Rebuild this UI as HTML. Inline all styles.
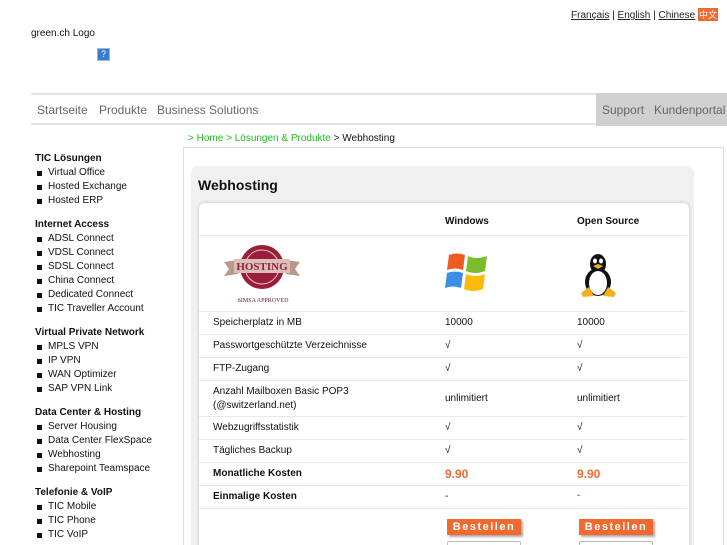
<!DOCTYPE html>
<html style="height:545px;overflow:hidden"><head><meta charset="utf-8"><style>
*{margin:0;padding:0;box-sizing:border-box}
body{width:727px;height:545px;overflow:hidden;background:#fff;font-family:"Liberation Sans",Arial,sans-serif;font-size:10px;color:#111;position:relative}
.a{position:absolute;white-space:nowrap}
.lang{top:8px;right:9px;font-size:10px}
.lang a{color:#222;text-decoration:underline}
.nav{left:31px;top:93px;width:696px;height:32px;border-top:2px solid #e2e2e2;border-bottom:2px solid #e2e2e2}
.nav span{position:absolute;top:8px;font-size:12px;color:#666}
.gray{position:absolute;left:565px;top:-2px;width:131px;height:33px;background:#d0d0d0}
.side{position:absolute;left:0;top:2px;width:180px;height:545px}
.side .h{font-weight:bold;left:35px}
.side .i{left:48px}
.side .b{left:37px;width:5px;height:5px;background:#111}
.box{left:183px;top:147px;width:541px;height:410px;border:1px solid #ddd}
.panel{left:191px;top:166px;width:503px;height:400px;background:#f0f0f0;border-radius:7px}
.tbl{left:199px;top:203px;width:490px;height:360px;background:#fff;border-radius:6px;box-shadow:0 0 3px #bbb}
.ln{position:absolute;left:199px;width:488px;height:1px;background:#e8e8e8}
.btn{background:#f06a30;color:#fff;font-weight:bold;font-size:11px;letter-spacing:1.5px;width:74px;height:16px;text-align:center;line-height:16px;box-shadow:2px 2px 2px #aaa}
.or{color:#f06a30;font-weight:bold;font-size:12px}
.t{position:absolute;left:0;top:1px;width:727px;height:545px}
</style></head><body>
<div class="a lang"><a>Français</a> | <a>English</a> | <a>Chinese</a> <span style="background:#f06a30;color:#fff;font-family:'Noto Sans CJK SC',sans-serif;font-size:9px;padding:0 1px">中文</span></div>
<div class="a" style="left:31px;top:28px;font-size:10px">green.ch Logo</div>
<div class="a" style="left:97px;top:48px;width:13px;height:13px;background:#3a7bd0;border:1px solid #9bc;color:#fff;font-size:9px;text-align:center;line-height:11px">?</div>
<div class="a nav"><div class="gray"></div>
<span style="left:6px">Startseite</span><span style="left:68px">Produkte</span><span style="left:126px">Business Solutions</span>
<span style="left:571px">Support</span><span style="left:623px">Kundenportal</span></div>
<div class="a" style="left:188px;top:133px;color:#22bb22">&gt; Home &gt; Lösungen &amp; Produkte <span style="color:#111">&gt; Webhosting</span></div>

<div class="side">
<div class="a h" style="top:151px">TIC Lösungen</div>
<div class="a b" style="top:169px"></div><div class="a i" style="top:165px">Virtual Office</div>
<div class="a b" style="top:183px"></div><div class="a i" style="top:179px">Hosted Exchange</div>
<div class="a b" style="top:197px"></div><div class="a i" style="top:193px">Hosted ERP</div>
<div class="a h" style="top:217px">Internet Access</div>
<div class="a b" style="top:235px"></div><div class="a i" style="top:231px">ADSL Connect</div>
<div class="a b" style="top:249px"></div><div class="a i" style="top:245px">VDSL Connect</div>
<div class="a b" style="top:263px"></div><div class="a i" style="top:259px">SDSL Connect</div>
<div class="a b" style="top:277px"></div><div class="a i" style="top:273px">China Connect</div>
<div class="a b" style="top:291px"></div><div class="a i" style="top:287px">Dedicated Connect</div>
<div class="a b" style="top:305px"></div><div class="a i" style="top:301px">TIC Traveller Account</div>
<div class="a h" style="top:325px">Virtual Private Network</div>
<div class="a b" style="top:343px"></div><div class="a i" style="top:339px">MPLS VPN</div>
<div class="a b" style="top:357px"></div><div class="a i" style="top:353px">IP VPN</div>
<div class="a b" style="top:371px"></div><div class="a i" style="top:367px">WAN Optimizer</div>
<div class="a b" style="top:385px"></div><div class="a i" style="top:381px">SAP VPN Link</div>
<div class="a h" style="top:405px">Data Center &amp; Hosting</div>
<div class="a b" style="top:423px"></div><div class="a i" style="top:419px">Server Housing</div>
<div class="a b" style="top:437px"></div><div class="a i" style="top:433px">Data Center FlexSpace</div>
<div class="a b" style="top:451px"></div><div class="a i" style="top:447px">Webhosting</div>
<div class="a b" style="top:465px"></div><div class="a i" style="top:461px">Sharepoint Teamspace</div>
<div class="a h" style="top:485px">Telefonie &amp; VoIP</div>
<div class="a b" style="top:503px"></div><div class="a i" style="top:499px">TIC Mobile</div>
<div class="a b" style="top:517px"></div><div class="a i" style="top:513px">TIC Phone</div>
<div class="a b" style="top:531px"></div><div class="a i" style="top:527px">TIC VoIP</div>
</div>

<div class="a box"></div>
<div class="a panel"></div>
<div class="a" style="left:198px;top:177px;font-size:14px;font-weight:bold">Webhosting</div>
<div class="a tbl"></div>
<div class="t">
<div class="a" style="left:445px;top:215px;font-weight:bold">Windows</div>
<div class="a" style="left:577px;top:215px;font-weight:bold">Open Source</div>
<div class="ln" style="top:234px"></div>
<svg class="a" style="left:224px;top:239px" width="78" height="66" viewBox="0 0 78 66">
<circle cx="38" cy="27" r="22" fill="#9b1d3a"/><circle cx="38" cy="27" r="17" fill="none" stroke="#e8c8c8" stroke-width="1"/>
<path d="M0 22 L14 20 L14 34 L0 36 L5 29Z M76 22 L62 20 L62 34 L76 36 L71 29Z" fill="#b89888"/>
<rect x="10" y="19" width="56" height="14" fill="#d8c0b8"/>
<text x="38" y="30" font-family="Liberation Serif" font-size="11" font-weight="bold" fill="#9b1d3a" text-anchor="middle">HOSTING</text>
<text x="39" y="62" font-family="Liberation Serif" font-size="6" fill="#6b2030" text-anchor="middle">SIMSA APPROVED</text></svg>
<svg class="a" style="left:445px;top:251px" width="44" height="40" viewBox="0 0 44 40">
<path d="M4 3 Q12 0 20 3 L18 18 Q10 15 2 18Z" fill="#f05a22"/><path d="M23 4 Q31 8 42 4 L40 19 Q30 23 21 19Z" fill="#7cbb2a"/>
<path d="M2 21 Q10 18 18 21 L16 36 Q8 33 0 36Z" fill="#3a8ee6"/><path d="M21 22 Q30 26 40 22 L38 37 Q28 41 19 37Z" fill="#fbbc09"/></svg>
<svg class="a" style="left:580px;top:251px" width="38" height="46" viewBox="0 0 38 46">
<ellipse cx="18" cy="12" rx="8" ry="10" fill="#111"/>
<ellipse cx="18" cy="30" rx="13" ry="14" fill="#111"/><ellipse cx="18" cy="31" rx="9" ry="12" fill="#fff"/>
<ellipse cx="15" cy="9" rx="2" ry="2.5" fill="#fff"/><ellipse cx="21" cy="9" rx="2" ry="2.5" fill="#fff"/>
<path d="M13 14 L18 12 L23 14 L18 17Z" fill="#f0b020"/>
<path d="M1 41 L9 35 L14 44 L3 45Z M36 41 L28 35 L23 44 L34 45Z" fill="#f0b020"/></svg>
<div class="ln" style="top:310px"></div>
<div class="a" style="left:213px;top:316px">Speicherplatz in MB</div><div class="a" style="left:445px;top:316px">10000</div><div class="a" style="left:577px;top:316px">10000</div>
<div class="ln" style="top:333px"></div>
<div class="a" style="left:213px;top:339px">Passwortgeschützte Verzeichnisse</div><div class="a" style="left:445px;top:339px">√</div><div class="a" style="left:577px;top:339px">√</div>
<div class="ln" style="top:356px"></div>
<div class="a" style="left:213px;top:362px">FTP-Zugang</div><div class="a" style="left:445px;top:362px">√</div><div class="a" style="left:577px;top:362px">√</div>
<div class="ln" style="top:379px"></div>
<div class="a" style="left:213px;top:384px;line-height:14px">Anzahl Mailboxen Basic POP3<br>(@switzerland.net)</div><div class="a" style="left:445px;top:392px">unlimitiert</div><div class="a" style="left:577px;top:392px">unlimitiert</div>
<div class="ln" style="top:415px"></div>
<div class="a" style="left:213px;top:421px">Webzugriffsstatistik</div><div class="a" style="left:445px;top:421px">√</div><div class="a" style="left:577px;top:421px">√</div>
<div class="ln" style="top:438px"></div>
<div class="a" style="left:213px;top:444px">Tägliches Backup</div><div class="a" style="left:445px;top:444px">√</div><div class="a" style="left:577px;top:444px">√</div>
<div class="ln" style="top:461px"></div>
<div class="a" style="left:213px;top:467px;font-weight:bold">Monatliche Kosten</div><div class="a or" style="left:445px;top:466px">9.90</div><div class="a or" style="left:577px;top:466px">9.90</div>
<div class="ln" style="top:484px"></div>
<div class="a" style="left:213px;top:490px;font-weight:bold">Einmalige Kosten</div><div class="a" style="left:445px;top:490px">-</div><div class="a or" style="left:577px;top:489px;font-size:10px">-</div>
<div class="ln" style="top:507px"></div>
<div class="a btn" style="left:447px;top:518px">Bestellen</div>
<div class="a btn" style="left:579px;top:518px">Bestellen</div>
<div class="a" style="left:447px;top:540px;width:74px;height:8px;border:1px solid #bbb;border-radius:2px"></div>
<div class="a" style="left:579px;top:540px;width:74px;height:8px;border:1px solid #bbb;border-radius:2px"></div>
</div>
</body></html>
